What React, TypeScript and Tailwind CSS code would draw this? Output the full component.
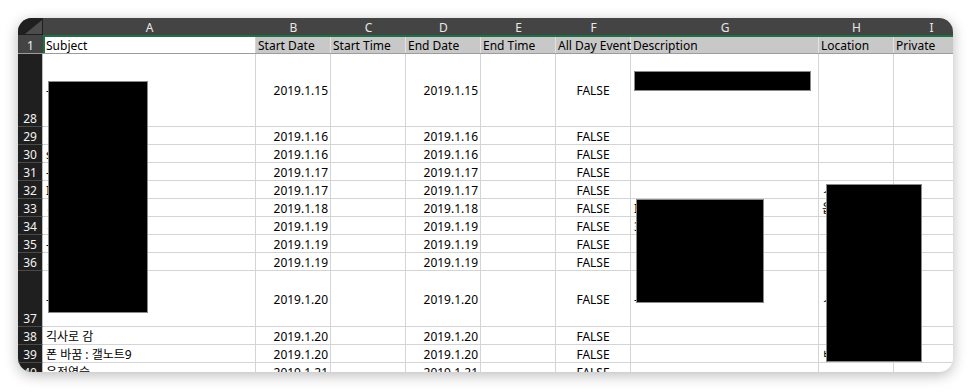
import React from "react";

type Row = {
  n: number;
  h: string;
  a: string;
  date: string;
  g?: string;
  loc?: string;
};

const rows: Row[] = [
  { n: 28, h: "h-[73px]", a: "-", date: "2019.1.15" },
  { n: 29, h: "h-[18px]", a: "ㅈ", date: "2019.1.16" },
  { n: 30, h: "h-[18px]", a: "s", date: "2019.1.16" },
  { n: 31, h: "h-[18px]", a: "-", date: "2019.1.17" },
  { n: 32, h: "h-[18px]", a: "I", date: "2019.1.17", loc: "ㅅ" },
  { n: 33, h: "h-[18px]", a: "ㅅ", date: "2019.1.18", g: "I", loc: "읍" },
  { n: 34, h: "h-[18px]", a: "ㅅ", date: "2019.1.19", g: "3" },
  { n: 35, h: "h-[18px]", a: "-", date: "2019.1.19" },
  { n: 36, h: "h-[18px]", a: "ㅅ", date: "2019.1.19" },
  { n: 37, h: "h-[56px]", a: "-", date: "2019.1.20", g: "-", loc: "ㅅ" },
  { n: 38, h: "h-[18px]", a: "긱사로 감", date: "2019.1.20" },
  { n: 39, h: "h-[18px]", a: "폰 바꿈 : 갤노트9", date: "2019.1.20", loc: "ㅂ" },
  { n: 40, h: "h-[18px]", a: "운전연습", date: "2019.1.21" },
];

const cell = "shrink-0 border-r border-b border-[#d4d4d4] flex items-center pt-[2px] overflow-hidden whitespace-nowrap";

function DataRow({ r }: { r: Row }) {
  const tall = r.h !== "h-[18px]";
  return (
    <div className={`flex ${r.h}`}>
      <div
        className={`w-[25px] shrink-0 bg-[#1f1f1f] border-b border-[#4a4a4a] border-r border-r-[#bdbdbd] flex justify-center text-[#f2f2f2] ${
          tall ? "items-end pb-[1px]" : "items-center pt-[2px]"
        }`}
      >
        {r.n}
      </div>
      <div className={`${cell} w-[213px] pl-[3px]`}>{r.a}</div>
      <div className={`${cell} w-[75px] justify-end pr-[2px]`}>{r.date}</div>
      <div className={`${cell} w-[75px]`}></div>
      <div className={`${cell} w-[75px] justify-end pr-[2px]`}>{r.date}</div>
      <div className={`${cell} w-[75px]`}></div>
      <div className={`${cell} w-[75px] justify-center`}>FALSE</div>
      <div className={`${cell} w-[188px] pl-[3px]`}>{r.g ?? ""}</div>
      <div className={`${cell} w-[75px] pl-[3px]`}>{r.loc ?? ""}</div>
      <div className={`${cell} w-[75px]`}></div>
    </div>
  );
}

const hcell = "shrink-0 flex items-center justify-center pt-[2px] text-[#e8e8e8]";
const r1 = "shrink-0 h-full flex items-center pt-[2px] whitespace-nowrap bg-[#c8c8c8] border-r border-[#e2e2e2] pl-[2px]";

export default function App() {
  return (
    <div className="w-[972px] h-[392px] bg-white pt-[18px] pl-[18px] font-[family-name:'Noto_Sans','Noto_Sans_CJK_KR',sans-serif] text-[12px] leading-none text-black">
      <div className="relative w-[935px] h-[354px] rounded-[14px] overflow-hidden bg-white shadow-[0_3px_14px_rgba(0,0,0,0.28)]">
        {/* column header */}
        <div className="flex h-[17px] bg-[#444444]">
          <div className="relative w-[25px] shrink-0 bg-[#1f1f1f]">
            <svg className="absolute inset-0" width="25" height="17" viewBox="0 0 25 17">
              <polygon points="24,2 24,16 7,16" fill="#4d4d4d" />
            </svg>
          </div>
          <div className={`${hcell} w-[213px]`}>A</div>
          <div className={`${hcell} w-[75px]`}>B</div>
          <div className={`${hcell} w-[75px]`}>C</div>
          <div className={`${hcell} w-[75px]`}>D</div>
          <div className={`${hcell} w-[75px]`}>E</div>
          <div className={`${hcell} w-[75px]`}>F</div>
          <div className={`${hcell} w-[188px]`}>G</div>
          <div className={`${hcell} w-[75px]`}>H</div>
          <div className={`${hcell} w-[75px]`}>I</div>
        </div>
        {/* green line */}
        <div className="flex h-[2px]">
          <div className="w-[25px] shrink-0 bg-[#444444]"></div>
          <div className="flex-1 bg-[#1e7145]"></div>
        </div>
        {/* row 1 */}
        <div className="flex h-[17px] border-b border-[#9c9c9c]">
          <div className="w-[25px] shrink-0 bg-[#444444] flex items-center justify-center pt-[2px] text-[#f2f2f2]">1</div>
          <div className="w-[2px] shrink-0 bg-[#1e7145]"></div>
          <div className="shrink-0 w-[211px] h-full flex items-center pt-[2px] pl-[1px] bg-white border-r border-[#d4d4d4]">Subject</div>
          <div className={`${r1} w-[75px]`}>Start Date</div>
          <div className={`${r1} w-[75px]`}>Start Time</div>
          <div className={`${r1} w-[75px]`}>End Date</div>
          <div className={`${r1} w-[75px]`}>End Time</div>
          <div className={`${r1} w-[75px]`}>All Day Event</div>
          <div className={`${r1} w-[188px]`}>Description</div>
          <div className={`${r1} w-[75px]`}>Location</div>
          <div className={`${r1} w-[75px]`}>Private</div>
        </div>
        {rows.map((r) => (
          <DataRow key={r.n} r={r} />
        ))}

        {/* redaction boxes */}
        <div className="absolute left-[30px] top-[63px] w-[100px] h-[232px] bg-black border border-[#8a8a8a]"></div>
        <div className="absolute left-[616px] top-[53px] w-[177px] h-[20px] bg-black border border-[#8a8a8a]"></div>
        <div className="absolute left-[618px] top-[181px] w-[128px] h-[104px] bg-black border border-[#8a8a8a]"></div>
        <div className="absolute left-[808px] top-[166px] w-[96px] h-[178px] bg-black border border-[#8a8a8a]"></div>
      </div>
    </div>
  );
}
